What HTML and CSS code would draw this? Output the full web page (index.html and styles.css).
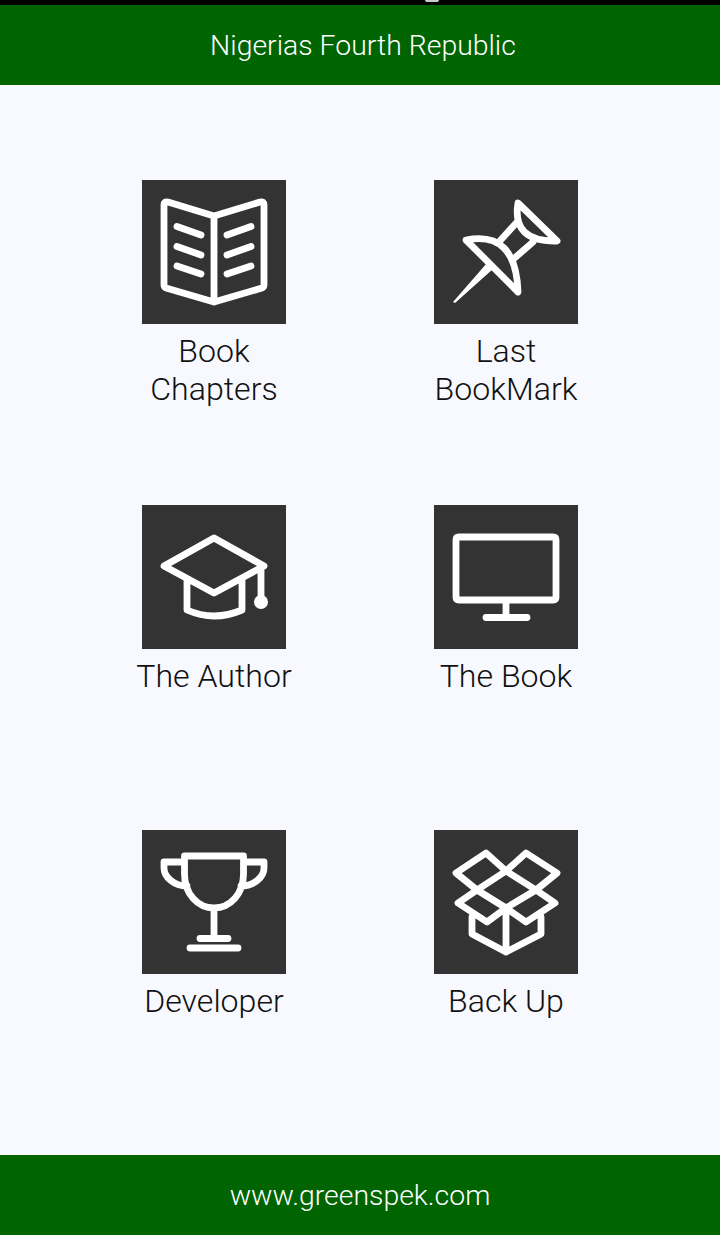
FILE: index.html
```html
<!DOCTYPE html>
<html>
<head>
  <meta charset="utf-8">
  <title>Nigerias Fourth Republic</title>
  <link rel="stylesheet" href="styles.css">
</head>

<body>
  <div class="status-bar"><span class="status-mark"></span></div>
  <header class="top-bar">Nigerias Fourth Republic</header>

  <main class="menu">
    <a class="menu-item">
      <svg class="tile" viewBox="0 0 144 144">
        <path d="M22 25Q22 21 26 22L72 36L118 22Q122 21 122 25V105Q122 107 120 108L72 122L24 108Q22 107 22 105ZM72 36V122" />
        <path d="M35 46.500L59 55M35 66.500L59 75M35 86L59 94M85 55L109 46.500M85 75L109 66.500M85 94L109 86" />
      </svg>
      <span class="label">Book<br>Chapters</span>
    </a>
    <a class="menu-item">
      <svg class="tile" viewBox="0 0 144 144">
        <path d="M84 23L123 61Q77.500 62 84 23ZM32 60L84 112Q82 50 32 60ZM84 41L64 63M99 62L80 78.500" />
        <path class="fill" d="M53 83L59 89L21 123L19 122Z" />
      </svg>
      <span class="label">Last<br>BookMark</span>
    </a>
    <a class="menu-item">
      <svg class="tile" viewBox="0 0 144 144">
        <path d="M72 33L122 61L72 88L22 61ZM45 74V105Q72 117 100 105V74M119 62V95" />
        <circle class="fill" cx="119" cy="97" r="7" />
      </svg>
      <span class="label">The Author</span>
    </a>
    <a class="menu-item">
      <svg class="tile" viewBox="0 0 144 144">
        <path d="M25 32H119Q122 32 122 35V92Q122 95 119 95H25Q22 95 22 92V35Q22 32 25 32ZM72 95V112M52 112.500H93" />
      </svg>
      <span class="label">The Book</span>
    </a>
    <a class="menu-item">
      <svg class="tile" viewBox="0 0 144 144">
        <path d="M42.500 26H101.500V44C101.500 64 88 78 72 78S42.500 64 42.500 44ZM42 32H22V38C22 47 32 56 45 56M102 32H122V38C122 47 112 56 99 56M72 78V108M58 108.500H86M48 118H96" />
      </svg>
      <span class="label">Developer</span>
    </a>
    <a class="menu-item">
      <svg class="tile" viewBox="0 0 144 144">
        <path d="M52 23L72 41L43 60L22 43ZM92 23L123 43L102 60L72 41ZM72 41L102 60L72 78L43 60ZM43 60L24 73L53 92L72 78L92 92L121 73L102 60M38 87V104L72 122L107 104V87M72 78V122" />
      </svg>
      <span class="label">Back Up</span>
    </a>
  </main>

  <footer class="bottom-bar">www.greenspek.com</footer>
</body>
</html>
```

FILE: styles.css
```css
html,
body {
  height: 100%;
}

body {
  display: flex;
  flex-direction: column;
  margin: 0;
  background: #f8f9ff;
  font-family: "Roboto", sans-serif;
  font-weight: 300;
  color: #111;
}

.status-bar {
  flex: 0 0 5px;
  background: #000;
}

.status-mark {
  display: block;
  width: 14px;
  height: 2px;
  margin-left: 425px;
  border-radius: 0 0 7px 7px;
  background: #ccc;
}

.top-bar,
.bottom-bar {
  flex: 0 0 80px;
  display: flex;
  justify-content: center;
  align-items: center;
  background: #006400;
  color: #fff;
  font-size: 28.400px;
}

.top-bar {
  padding-left: 6px;
}

.menu {
  flex: 1;
  display: grid;
  grid-template-columns: 292px 292px;
  grid-auto-rows: 325px;
  justify-content: center;
  padding-top: 95px;
}

.menu-item {
  display: flex;
  flex-direction: column;
  align-items: center;
  text-align: center;
}

.tile {
  width: 144px;
  height: 144px;
  background: #333;
}

.tile path {
  fill: none;
  stroke: #fff;
  stroke-width: 6.800;
  stroke-linecap: round;
  stroke-linejoin: round;
}

.tile .fill {
  fill: #fff;
  stroke: none;
}

.label {
  margin-top: 8px;
  font-size: 32.100px;
  line-height: 38px;
}
```
